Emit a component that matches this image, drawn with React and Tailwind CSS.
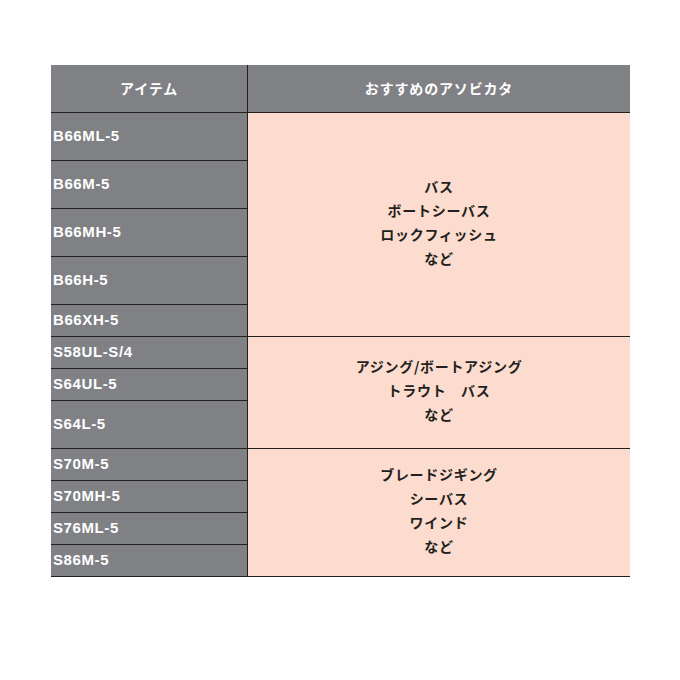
const groups = [
  {
    items: [
      { name: 'B66ML-5', h: 'h-[48px]' },
      { name: 'B66M-5', h: 'h-[48px]' },
      { name: 'B66MH-5', h: 'h-[48px]' },
      { name: 'B66H-5', h: 'h-[48px]' },
      { name: 'B66XH-5', h: 'h-[32px]' },
    ],
    uses: ['バス', 'ボートシーバス', 'ロックフィッシュ', 'など'],
  },
  {
    items: [
      { name: 'S58UL-S/4', h: 'h-[32px]' },
      { name: 'S64UL-5', h: 'h-[32px]' },
      { name: 'S64L-5', h: 'h-[48px]' },
    ],
    uses: ['アジング/ボートアジング', 'トラウト　バス', 'など'],
  },
  {
    items: [
      { name: 'S70M-5', h: 'h-[32px]' },
      { name: 'S70MH-5', h: 'h-[32px]' },
      { name: 'S76ML-5', h: 'h-[32px]' },
      { name: 'S86M-5', h: 'h-[32px]' },
    ],
    uses: ['ブレードジギング', 'シーバス', 'ワインド', 'など'],
  },
];

const jp = { fontFamily: '"Noto Sans CJK JP", "Noto Sans", sans-serif' };
const latin = { fontFamily: '"Liberation Sans", Arial, sans-serif' };

export default function App() {
  return (
    <div className="w-[680px] h-[680px] bg-white pt-[65px] pl-[51px]">
      <div className="w-[579px]">
        {/* Header */}
        <div className="flex h-[48px] bg-[#808184] border-b border-[#231f20] text-white font-bold text-[14px] tracking-[0.06em]" style={jp}>
          <div className="w-[197px] border-r border-[#231f20] flex items-center justify-center">アイテム</div>
          <div className="flex-1 flex items-center justify-center">おすすめのアソビカタ</div>
        </div>

        {groups.map((g, i) => (
          <div key={i} className="flex">
            <div className="w-[197px] bg-[#808184] border-r border-[#231f20] flex flex-col">
              {g.items.map((it) => (
                <div
                  key={it.name}
                  className={`${it.h} flex items-center pl-[2px] text-white font-bold text-[15px] tracking-[0.04em] border-b border-[#231f20]`}
                  style={latin}
                >
                  {it.name}
                </div>
              ))}
            </div>
            <div className="flex-1 bg-[#fcdcce] border-b border-[#231f20] flex flex-col items-center justify-center pb-[5px] text-[#231f20] font-bold text-[14px] leading-[24px] tracking-[0.05em]" style={jp}>
              {g.uses.map((u) => (
                <div key={u}>{u}</div>
              ))}
            </div>
          </div>
        ))}
      </div>
    </div>
  );
}
